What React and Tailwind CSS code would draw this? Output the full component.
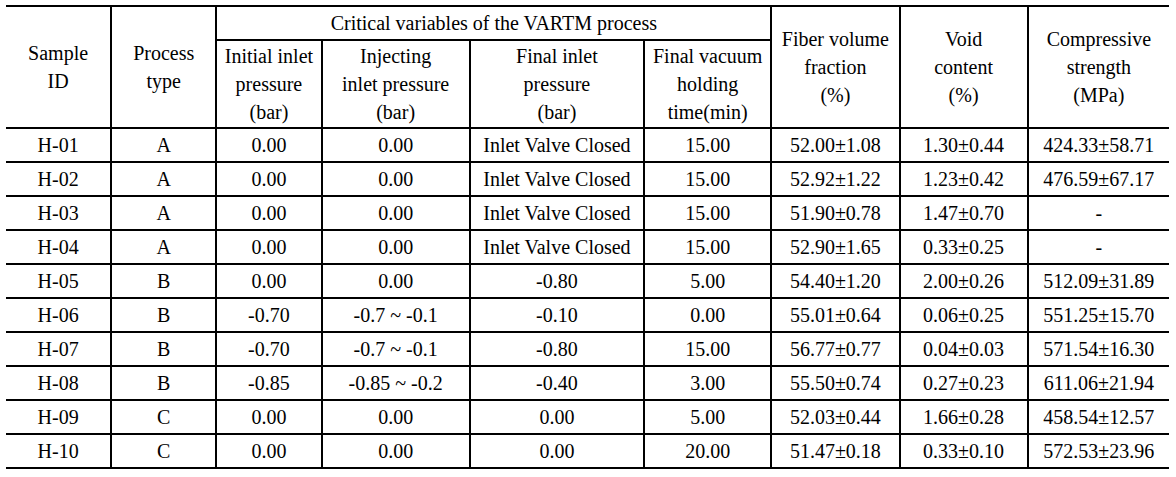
import React from "react";

const rows = [
  ["H-01", "A", "0.00", "0.00", "Inlet Valve Closed", "15.00", "52.00±1.08", "1.30±0.44", "424.33±58.71"],
  ["H-02", "A", "0.00", "0.00", "Inlet Valve Closed", "15.00", "52.92±1.22", "1.23±0.42", "476.59±67.17"],
  ["H-03", "A", "0.00", "0.00", "Inlet Valve Closed", "15.00", "51.90±0.78", "1.47±0.70", "-"],
  ["H-04", "A", "0.00", "0.00", "Inlet Valve Closed", "15.00", "52.90±1.65", "0.33±0.25", "-"],
  ["H-05", "B", "0.00", "0.00", "-0.80", "5.00", "54.40±1.20", "2.00±0.26", "512.09±31.89"],
  ["H-06", "B", "-0.70", "-0.7 ~ -0.1", "-0.10", "0.00", "55.01±0.64", "0.06±0.25", "551.25±15.70"],
  ["H-07", "B", "-0.70", "-0.7 ~ -0.1", "-0.80", "15.00", "56.77±0.77", "0.04±0.03", "571.54±16.30"],
  ["H-08", "B", "-0.85", "-0.85 ~ -0.2", "-0.40", "3.00", "55.50±0.74", "0.27±0.23", "611.06±21.94"],
  ["H-09", "C", "0.00", "0.00", "0.00", "5.00", "52.03±0.44", "1.66±0.28", "458.54±12.57"],
  ["H-10", "C", "0.00", "0.00", "0.00", "20.00", "51.47±0.18", "0.33±0.10", "572.53±23.96"],
];

const widths = [105, 105, 105, 148, 174, 127, 128, 128, 141];

export default function App() {
  const hd = "border-2 border-black text-center align-middle leading-[28px] p-0";
  return (
    <div className="bg-white w-[1176px] h-[477px] pt-[5px] pl-[6px] font-['Liberation_Serif',serif] text-[20px] text-black">
      <table className="border-collapse table-fixed w-[1163px] [&_td:first-child]:border-l-0 [&_td:last-child]:border-r-0">
        <colgroup>
          {widths.map((w, i) => (
            <col key={i} style={{ width: w }} />
          ))}
        </colgroup>
        <thead>
          <tr className="h-[34px]">
            <td rowSpan={2} className={hd}>Sample<br />ID</td>
            <td rowSpan={2} className={hd}>Process<br />type</td>
            <td colSpan={4} className={hd + " pb-[1px]"}>Critical variables of the VARTM process</td>
            <td rowSpan={2} className={hd}>Fiber volume<br />fraction<br />(%)</td>
            <td rowSpan={2} className={hd}>Void<br />content<br />(%)</td>
            <td rowSpan={2} className={hd}>Compressive<br />strength<br />(MPa)</td>
          </tr>
          <tr className="h-[88px]">
            <td className={hd + " !border-l-2"}>Initial inlet<br />pressure<br />(bar)</td>
            <td className={hd}>Injecting<br />inlet pressure<br />(bar)</td>
            <td className={hd}>Final inlet<br />pressure<br />(bar)</td>
            <td className={hd + " !border-r-2"}>Final vacuum<br />holding<br />time(min)</td>
          </tr>
        </thead>
        <tbody>
          {rows.map((r) => (
            <tr key={r[0]} className="h-[34px]">
              {r.map((c, i) => (
                <td
                  key={i}
                  className="border-2 border-black text-center align-middle p-0 leading-[24px]"
                >
                  {c}
                </td>
              ))}
            </tr>
          ))}
        </tbody>
      </table>
    </div>
  );
}
